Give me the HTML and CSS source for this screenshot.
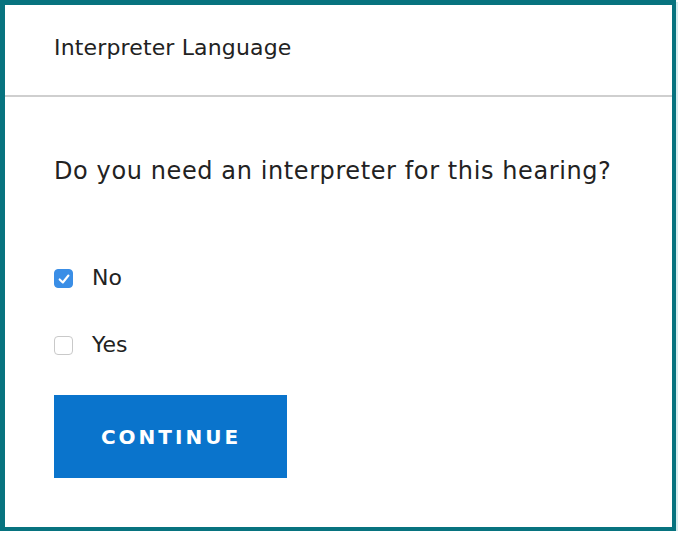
FILE: index.html
```html
<!DOCTYPE html>
<html>
<head>
<meta charset="utf-8">
<link rel="stylesheet" href="styles.css">
</head>
<body>
<div class="frame">
  <div class="header">Interpreter Language</div>
  <div class="content">
    <div class="question">Do you need an interpreter for this hearing?</div>
    <div class="options">
      <label class="option">
        <span class="box checked">
          <svg width="14" height="14" viewBox="0 0 12 12"><path d="M2.3 6.4 L5 9 L9.8 3" fill="none" stroke="#fff" stroke-width="1.8" stroke-linecap="round" stroke-linejoin="round"/></svg>
        </span>
        <span class="label">No</span>
      </label>
      <label class="option">
        <span class="box"></span>
        <span class="label">Yes</span>
      </label>
    </div>
    <button class="btn">CONTINUE</button>
  </div>
</div>
</body>
</html>
```

FILE: styles.css
```css
html, body {
  margin: 0;
  padding: 0;
  background: #ffffff;
}
.frame {
  box-sizing: border-box;
  width: 676px;
  height: 531px;
  border-style: solid;
  border-color: #07737f;
  border-width: 5px 4px 4px 5px;
  background: #ffffff;
  font-family: "DejaVu Sans", "Liberation Sans", sans-serif;
  color: #222;
  box-shadow: 2px 2px 0 #d6ecee;
}
.header {
  height: 92px;
  box-sizing: border-box;
  border-bottom: 2px solid #cfcfcf;
  padding-left: 49px;
  padding-bottom: 6px;
  display: flex;
  align-items: center;
  font-size: 22px;
  letter-spacing: 0.15px;
}
.content {
  padding-left: 49px;
}
.question {
  margin-top: 59px;
  font-size: 24px;
  line-height: 30px;
  letter-spacing: 0.6px;
}
.options {
  margin-top: 79px;
  display: flex;
  flex-direction: column;
  gap: 43px;
}
.option {
  display: flex;
  align-items: center;
  gap: 19px;
  height: 24px;
}
.box {
  width: 19px;
  height: 19px;
  box-sizing: border-box;
  border: 1.5px solid #c9c9c9;
  border-radius: 4px;
  display: flex;
  align-items: center;
  justify-content: center;
  margin-top: 3px;
}
.box.checked {
  background: #3a8ee6;
  border-color: #3a8ee6;
}
.label {
  font-size: 22px;
}
.btn {
  margin-top: 39px;
  width: 233px;
  height: 83px;
  border: none;
  background: #0a74cc;
  color: #fff;
  font-family: "DejaVu Sans", sans-serif;
  font-weight: bold;
  font-size: 20px;
  letter-spacing: 3px;
  padding: 0 0 0 1px;
  display: block;
}
```
